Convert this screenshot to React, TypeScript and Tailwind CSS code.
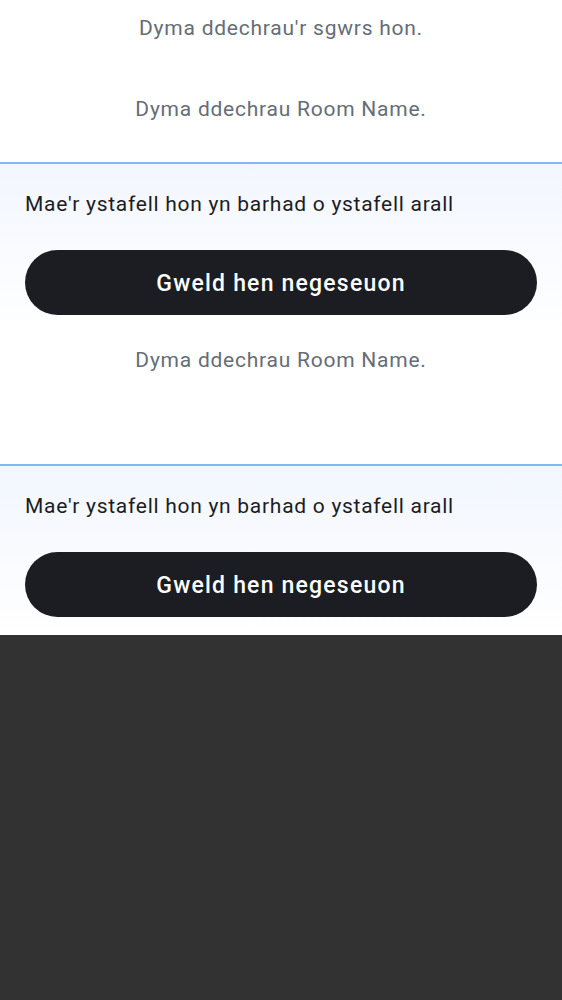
import React from "react";

function Notice() {
  return (
    <div className="border-t-2 border-[#8ab4f8] bg-gradient-to-b from-[#f2f6fe] to-white px-[25px] pt-[26px] pb-[18px]">
      <p className="text-[21px] leading-[28px] tracking-[0.72px] text-[#1b1d22]">Mae'r ystafell hon yn barhad o ystafell arall</p>
      <button className="mt-8 flex h-[65px] w-full items-center justify-center rounded-full bg-[#1b1d22] pt-[3px] text-[23px] font-medium tracking-[1.2px] text-white">
        Gweld hen negeseuon
      </button>
    </div>
  );
}

export default function App() {
  return (
    <div className="min-h-screen bg-[#323232]" style={{ fontFamily: "Roboto, 'Noto Sans', sans-serif" }}>
      <div className="bg-white">
        <div className="pt-[14px] pb-[39px] text-center text-[21px] leading-[28px] tracking-[0.76px] text-[#656d77]">
          <p>Dyma ddechrau'r sgwrs hon.</p>
          <p className="mt-[53px]">Dyma ddechrau Room Name.</p>
        </div>
        <Notice />
        <div className="pt-[13px] pb-[90px] text-center text-[21px] leading-[28px] tracking-[0.76px] text-[#656d77]">
          <p>Dyma ddechrau Room Name.</p>
        </div>
        <Notice />
      </div>
    </div>
  );
}
